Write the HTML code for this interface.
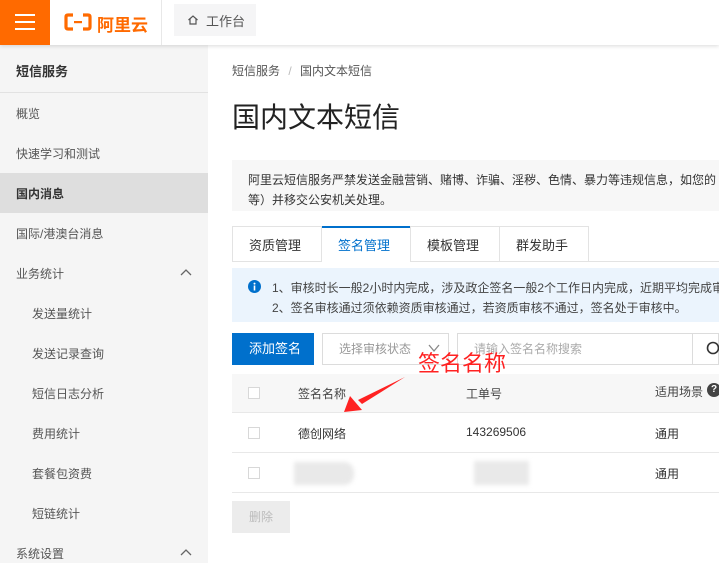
<!DOCTYPE html>
<html><head><meta charset="utf-8"><style>
*{margin:0;padding:0;box-sizing:border-box}
body{width:719px;height:563px;overflow:hidden;background:#fff;font-family:"Liberation Sans","Noto Sans CJK SC",sans-serif;font-size:12px;color:#333;position:relative}
.a{position:absolute;white-space:nowrap}
.hdr{left:0;top:0;width:719px;height:45px;background:#fff;box-shadow:0 1px 4px rgba(0,0,0,.15);z-index:2}
.side{left:0;top:45px;width:208px;height:518px;background:#f5f5f5}
.si{left:16px;font-size:12px;color:#555}
.sub{left:32px;font-size:12px;color:#555}
</style></head><body>
<div class="a hdr">
 <div class="a" style="left:0;top:0;width:50px;height:45px;background:#ff6a00"></div>
 <div class="a" style="left:15px;top:14px;width:20px;height:2px;background:#fff"></div>
 <div class="a" style="left:15px;top:21px;width:20px;height:2px;background:#fff"></div>
 <div class="a" style="left:15px;top:28px;width:20px;height:2px;background:#fff"></div>
 <svg class="a" style="left:64px;top:12px" width="28" height="20" viewBox="0 0 28 20"><path d="M9 3H4Q2 3 2 5V15Q2 17 4 17H9M19 3H24Q26 3 26 5V15Q26 17 24 17H19" fill="none" stroke="#ff6a00" stroke-width="3.2"/><rect x="10" y="9" width="8" height="2.2" fill="#ff6a00"/></svg>
 <div class="a" style="left:97px;top:11px;font-size:17px;font-weight:bold;color:#ff6a00">阿里云</div>
 <div class="a" style="left:161px;top:0;width:1px;height:45px;background:#e8e8e8"></div>
 <div class="a" style="left:174px;top:4px;width:82px;height:32px;background:#f5f5f6"></div>
 <svg class="a" style="left:187px;top:14px" width="12" height="12" viewBox="0 0 12 12"><path d="M1.5 6L6 2L10.5 6M3 5V10H9V5" fill="none" stroke="#555" stroke-width="1.2"/></svg>
 <div class="a" style="left:206px;top:11px;font-size:13px;color:#555">工作台</div>
</div>
<div class="a side"></div>
<div class="a" style="left:16px;top:61px;font-size:13px;font-weight:bold;color:#333">短信服务</div>
<div class="a" style="left:0;top:92px;width:208px;height:1px;background:#e2e2e2"></div>
<div class="a si" style="top:105px">概览</div>
<div class="a si" style="top:145px">快速学习和测试</div>
<div class="a" style="left:0;top:173px;width:208px;height:40px;background:#dedede"></div>
<div class="a si" style="top:185px;font-weight:bold;color:#333">国内消息</div>
<div class="a si" style="top:225px">国际/港澳台消息</div>
<div class="a si" style="top:265px">业务统计</div>
<svg class="a" style="left:180px;top:268px" width="12" height="8"><path d="M1 7L6 2L11 7" fill="none" stroke="#666" stroke-width="1.3"/></svg>
<div class="a sub" style="top:305px">发送量统计</div>
<div class="a sub" style="top:345px">发送记录查询</div>
<div class="a sub" style="top:385px">短信日志分析</div>
<div class="a sub" style="top:425px">费用统计</div>
<div class="a sub" style="top:465px">套餐包资费</div>
<div class="a sub" style="top:505px">短链统计</div>
<div class="a si" style="top:545px">系统设置</div>
<svg class="a" style="left:180px;top:548px" width="12" height="8"><path d="M1 7L6 2L11 7" fill="none" stroke="#666" stroke-width="1.3"/></svg>

<div class="a" style="left:232px;top:62px;color:#555">短信服务 <span style="color:#bbb;margin:0 5px">/</span> 国内文本短信</div>
<div class="a" style="left:232px;top:96px;font-size:28px;color:#222">国内文本短信</div>
<div class="a" style="left:232px;top:160px;width:487px;height:51px;background:#f7f7f7"></div>
<div class="a" style="left:248px;top:170px;color:#333;line-height:20px">阿里云短信服务严禁发送金融营销、赌博、诈骗、淫秽、色情、暴力等违规信息，如您的<br>等）并移交公安机关处理。</div>

<div class="a" style="left:232px;top:226px;width:357px;height:36px;border:1px solid #e3e3e3;background:#fff"></div>
<div class="a" style="left:232px;top:261px;width:487px;height:1px;background:#e3e3e3"></div>
<div class="a" style="left:321px;top:226px;width:1px;height:36px;background:#e3e3e3"></div>
<div class="a" style="left:410px;top:226px;width:1px;height:36px;background:#e3e3e3"></div>
<div class="a" style="left:499px;top:226px;width:1px;height:36px;background:#e3e3e3"></div>
<div class="a" style="left:322px;top:226px;width:88px;height:37px;background:#fff;border-top:2px solid #0070cc"></div>
<div class="a" style="left:249px;top:235px;font-size:13px;color:#333">资质管理</div>
<div class="a" style="left:338px;top:235px;font-size:13px;color:#0070cc">签名管理</div>
<div class="a" style="left:427px;top:235px;font-size:13px;color:#333">模板管理</div>
<div class="a" style="left:516px;top:235px;font-size:13px;color:#333">群发助手</div>

<div class="a" style="left:232px;top:268px;width:487px;height:54px;background:#ebf4fd"></div>
<svg class="a" style="left:248px;top:280px" width="13" height="13"><circle cx="6.5" cy="6.5" r="6.5" fill="#0070cc"/><rect x="5.7" y="5.5" width="1.6" height="5" fill="#fff"/><circle cx="6.5" cy="3.6" r="1" fill="#fff"/></svg>
<div class="a" style="left:272px;top:278px;color:#444;line-height:20px">1、审核时长一般2小时内完成，涉及政企签名一般2个工作日内完成，近期平均完成审<br>2、签名审核通过须依赖资质审核通过，若资质审核不通过，签名处于审核中。</div>

<div class="a" style="left:232px;top:333px;width:82px;height:32px;background:#0070cc;color:#fff;font-size:13px;line-height:32px;padding-left:17px">添加签名</div>
<div class="a" style="left:322px;top:333px;width:127px;height:32px;border:1px solid #dcdcdc;color:#999;line-height:30px;padding-left:16px">选择审核状态</div>
<svg class="a" style="left:428px;top:344px" width="12" height="10"><path d="M1 1L6 7L11 1" fill="none" stroke="#888" stroke-width="1.3"/></svg>
<div class="a" style="left:457px;top:333px;width:262px;height:32px;border:1px solid #dcdcdc;color:#aaa;line-height:30px;padding-left:16px">请输入签名名称搜索</div>
<div class="a" style="left:692px;top:333px;width:1px;height:32px;background:#dcdcdc"></div>
<svg class="a" style="left:706px;top:341px" width="16" height="16"><circle cx="7" cy="7" r="5.5" fill="none" stroke="#333" stroke-width="1.6"/></svg>

<div class="a" style="left:232px;top:374px;width:487px;height:38px;background:#f7f7f7"></div>
<div class="a" style="left:232px;top:412px;width:487px;height:1px;background:#e8e8e8"></div>
<div class="a" style="left:232px;top:452px;width:487px;height:1px;background:#e8e8e8"></div>
<div class="a" style="left:232px;top:492px;width:487px;height:1px;background:#e8e8e8"></div>
<div class="a" style="left:248px;top:387px;width:12px;height:12px;border:1px solid #d8d8d8;background:#fff"></div>
<div class="a" style="left:248px;top:427px;width:12px;height:12px;border:1px solid #d8d8d8;background:#fff"></div>
<div class="a" style="left:248px;top:467px;width:12px;height:12px;border:1px solid #d8d8d8;background:#fff"></div>
<div class="a" style="left:298px;top:385px;color:#444">签名名称</div>
<div class="a" style="left:466px;top:385px;color:#444">工单号</div>
<div class="a" style="left:655px;top:383px;color:#444">适用场景</div>
<div class="a" style="left:707px;top:383px;width:14px;height:14px;border-radius:7px;background:#444;color:#fff;font-size:10px;font-weight:bold;text-align:center;line-height:14px">?</div>
<div class="a" style="left:298px;top:425px;color:#333">德创网络</div>
<div class="a" style="left:466px;top:425px;color:#333">143269506</div>
<div class="a" style="left:655px;top:425px;color:#333">通用</div>
<div class="a" style="left:294px;top:462px;width:60px;height:23px;background:#e9e9e9;border-radius:0 10px 10px 0;filter:blur(2px)"></div>
<div class="a" style="left:474px;top:461px;width:55px;height:24px;background:#e9e9e9;filter:blur(2px)"></div>
<div class="a" style="left:655px;top:465px;color:#333">通用</div>
<div class="a" style="left:232px;top:501px;width:58px;height:32px;background:#ececec;color:#bbb;line-height:32px;text-align:center">删除</div>

<div class="a" style="left:418px;top:346px;font-size:22px;color:#f22">签名名称</div>
<svg class="a" style="left:340px;top:372px" width="70" height="45"><path d="M65 5L22 32L18 28Z" fill="#f22"/><path d="M4 40L10 24L22 38Z" fill="#f22"/></svg>
</body></html>
